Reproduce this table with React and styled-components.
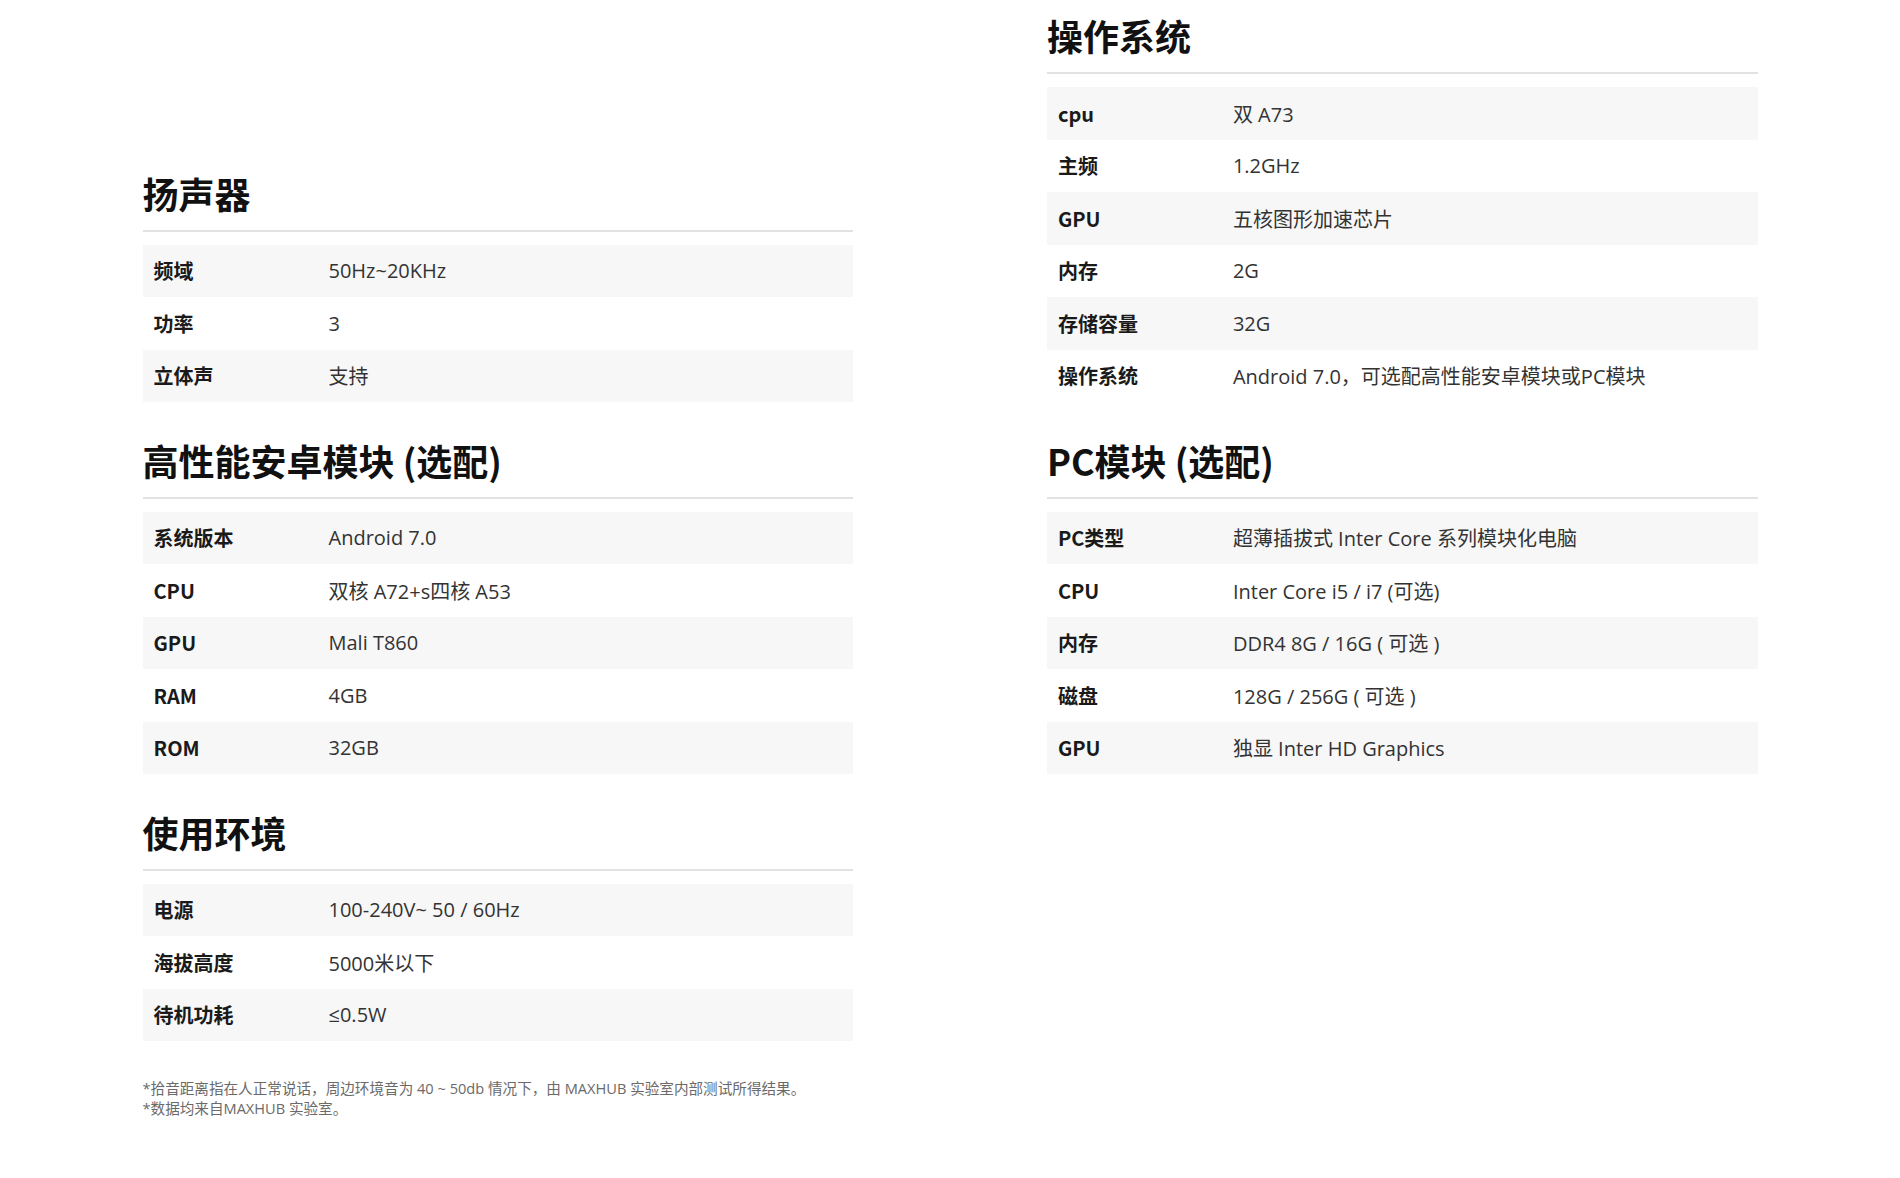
import React from "react";
import styled, { createGlobalStyle } from "styled-components";

const GlobalStyle = createGlobalStyle`
  html, body {
    margin: 0;
    padding: 0;
    background: #ffffff;
  }
  body {
    font-family: "Open Sans", "Noto Sans CJK SC", sans-serif;
    color: #333;
  }
  * { box-sizing: border-box; }
`;

const Page = styled.div`
  width: 85%;
  margin: 0 auto;
  padding-top: 13px;
  padding-bottom: 40px;
`;

const Grid = styled.div`
  display: grid;
  grid-template-columns: 44% 44%;
  justify-content: space-between;
  row-gap: 35.5px;
  align-items: end;
`;

const Section = styled.section`
  display: flex;
  flex-direction: column;
`;

const Heading = styled.h2`
  margin: 0 0 13px;
  padding-bottom: 15px;
  font-family: "Noto Sans CJK SC", "Open Sans", sans-serif;
  font-size: 36px;
  line-height: 44px;
  font-weight: 700;
  color: #111;
  border-bottom: 2px solid #e2e2e2;
`;

const List = styled.div`
  display: flex;
  flex-direction: column;
`;

const Row = styled.div`
  display: grid;
  grid-template-columns: 175px 1fr;
  align-items: center;
  height: 52.5px;
  padding-left: 11px;
  background: ${(p) => (p.$shaded ? "#f7f7f7" : "transparent")};
  font-size: 20px;
`;

const Label = styled.span`
  font-family: "Noto Sans CJK SC", "Open Sans", sans-serif;
  font-weight: 700;
  color: #1a1a1a;
`;

const Value = styled.span`
  color: #333;
  font-family: "Open Sans", "Noto Sans CJK SC", sans-serif;
`;

const Footer = styled.div`
  margin-top: 38px;
  font-size: 14.6px;
  line-height: 19.5px;
  color: #6a6a6a;
`;

const sections = [
  {
    title: "扬声器",
    rows: [
      ["频域", "50Hz~20KHz"],
      ["功率", "3"],
      ["立体声", "支持"],
    ],
  },
  {
    title: "操作系统",
    rows: [
      ["cpu", "双 A73"],
      ["主频", "1.2GHz"],
      ["GPU", "五核图形加速芯片"],
      ["内存", "2G"],
      ["存储容量", "32G"],
      ["操作系统", "Android 7.0，可选配高性能安卓模块或PC模块"],
    ],
  },
  {
    title: "高性能安卓模块 (选配)",
    rows: [
      ["系统版本", "Android 7.0"],
      ["CPU", "双核 A72+s四核 A53"],
      ["GPU", "Mali T860"],
      ["RAM", "4GB"],
      ["ROM", "32GB"],
    ],
  },
  {
    title: "PC模块 (选配)",
    rows: [
      ["PC类型", "超薄插拔式 Inter Core 系列模块化电脑"],
      ["CPU", "Inter Core i5 / i7 (可选)"],
      ["内存", "DDR4 8G / 16G ( 可选 )"],
      ["磁盘", "128G / 256G ( 可选 )"],
      ["GPU", "独显 Inter HD Graphics"],
    ],
  },
  {
    title: "使用环境",
    rows: [
      ["电源", "100-240V~ 50 / 60Hz"],
      ["海拔高度", "5000米以下"],
      ["待机功耗", "≤0.5W"],
    ],
  },
];

export default function App() {
  return (
    <>
      <GlobalStyle />
      <Page>
        <Grid>
          {sections.map((s) => (
            <Section key={s.title}>
              <Heading>{s.title}</Heading>
              <List>
                {s.rows.map(([k, v], i) => (
                  <Row key={k + i} $shaded={i % 2 === 0}>
                    <Label>{k}</Label>
                    <Value>{v}</Value>
                  </Row>
                ))}
              </List>
            </Section>
          ))}
        </Grid>
        <Footer>
          *拾音距离指在人正常说话，周边环境音为 40 ~ 50db 情况下，由 MAXHUB 实验室内部测试所得结果。
          <br />
          *数据均来自MAXHUB 实验室。
        </Footer>
      </Page>
    </>
  );
}
